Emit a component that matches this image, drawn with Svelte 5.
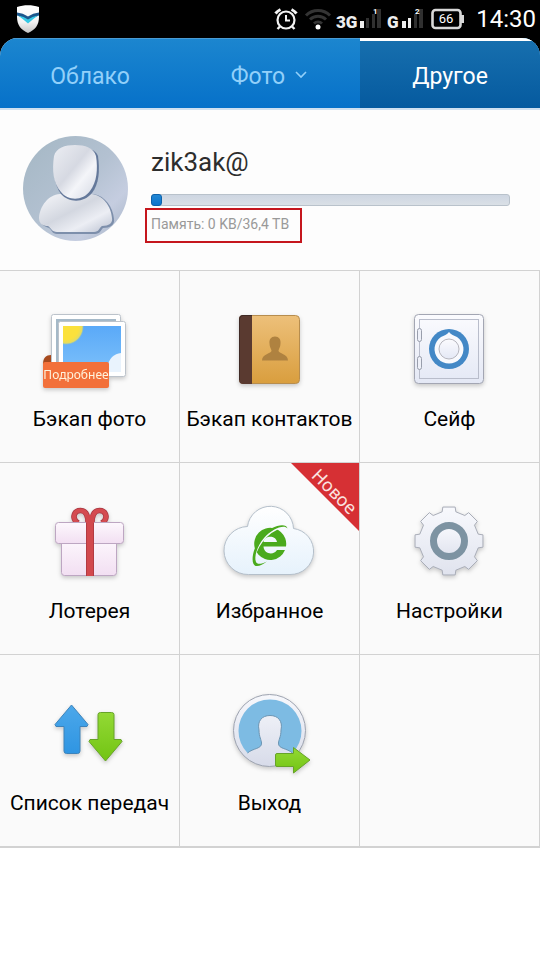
<script lang="ts">
  type Tile = { id: string; label: string; ribbon?: string };

  const tiles: Tile[] = [
    { id: 'photos', label: 'Бэкап фото' },
    { id: 'contacts', label: 'Бэкап контактов' },
    { id: 'safe', label: 'Сейф' },
    { id: 'lottery', label: 'Лотерея' },
    { id: 'favorites', label: 'Избранное', ribbon: 'Новое' },
    { id: 'settings', label: 'Настройки' },
    { id: 'transfers', label: 'Список передач' },
    { id: 'logout', label: 'Выход' },
  ];

  const tabs = [
    { id: 'cloud', label: 'Облако' },
    { id: 'photo', label: 'Фото', menu: true },
    { id: 'other', label: 'Другое' },
  ];

  let active = $state('other');

  // Eight-toothed cog outline around (cx, cy)
  function gearPath(cx: number, cy: number, outer: number, root: number): string {
    const points: string[] = [];
    for (let i = 0; i < 8; i++) {
      const mid = (i * Math.PI) / 4;
      const steps = [
        [-0.23, root],
        [-0.18, outer],
        [0.18, outer],
        [0.23, root],
      ];
      for (const [offset, r] of steps) {
        const x = cx + r * Math.sin(mid + offset);
        const y = cy - r * Math.cos(mid + offset);
        points.push(`${x.toFixed(2)} ${y.toFixed(2)}`);
      }
    }
    return `M${points.join('L')}Z`;
  }
</script>

<div class="screen">
  <header class="status">
    <svg class="shield" width="24" height="28" viewBox="0 0 24 28" aria-hidden="true">
      <defs>
        <linearGradient id="shield" x1="0" y1="0" x2="0" y2="1">
          <stop offset="0" stop-color="#fff" />
          <stop offset="0.6" stop-color="#f4f4f4" />
          <stop offset="1" stop-color="#c4c4c4" />
        </linearGradient>
      </defs>
      <path d="M1 2C8-.3 16-.3 23 2V12C23 20 19 25 12 28C5 25 1 20 1 12Z" fill="url(#shield)" />
      <path d="M1 7.500Q7 8 12 11.500Q17 8 23 7.500V10.500Q17 12 12 15.500Q7 12 1 10.500Z" fill="#1c568c" />
      <path d="M2 10.500Q8 11.500 12 14.500Q16 11.500 22 10.500Q17 14 12 18.500Q7 14 2 10.500Z" fill="#35c8e4" />
    </svg>

    <div class="indicators">
      <svg width="24" height="24" viewBox="0 0 24 24" fill="none" stroke="#f2f2f2" aria-hidden="true">
        <circle cx="12" cy="13" r="8.500" stroke-width="2.200" />
        <path d="M12 8V13.500H16" stroke-width="2" />
        <path d="M1.500 6.500A14 14 0 0 1 6.500 2.500M17.500 2.500A14 14 0 0 1 22.500 6.500" stroke-width="3" />
        <path d="M6 19.500L3.500 22M18 19.500L20.500 22" stroke-width="2.400" />
      </svg>
      <svg width="30" height="24" viewBox="-2 0 30 24" fill="none" stroke="#343434" stroke-width="3" aria-hidden="true">
        <path d="M2 8.500A17 17 0 0 1 26 8.500" />
        <path d="M6 12.500A11.500 11.500 0 0 1 22 12.500" />
        <path d="M10 16.500A6 6 0 0 1 18 16.500" />
        <circle cx="14" cy="20" r="2.500" fill="#fff" stroke="none" />
      </svg>
      <svg width="47" height="24" viewBox="0 0 47 24" aria-hidden="true">
        <text class="net" x="0" y="21">3G</text>
        <path d="M24 14h4v7h-4z" fill="#eee" />
        <path d="M30 11h3v10h-3zM36 7h3v14h-3zM41 2h4v19h-4z" fill="#303030" />
        <text class="sim" x="37" y="7">1</text>
      </svg>
      <svg width="38" height="24" viewBox="0 0 38 24" aria-hidden="true">
        <text class="net" x="0" y="21">G</text>
        <path d="M15 14h4v7h-4zM21 11h3v10h-3z" fill="#eee" />
        <path d="M27 7h3v14h-3zM32 2h4v19h-4z" fill="#303030" />
        <text class="sim" x="28" y="7">2</text>
      </svg>
      <svg class="battery" width="33" height="24" viewBox="0 0 33 24" aria-hidden="true">
        <rect x="1.500" y="3" width="28" height="18" rx="3" fill="none" stroke="#d8d8d8" stroke-width="2.600" />
        <path d="M30 8h3v8h-3z" fill="#d8d8d8" />
        <text x="15" y="16" text-anchor="middle">66</text>
      </svg>
      <time>14:30</time>
    </div>
  </header>

  <nav class="tabs">
    {#each tabs as tab (tab.id)}
      <button class="tab" class:active={active === tab.id} onclick={() => (active = tab.id)}>
        {tab.label}
        {#if tab.menu}
          <svg width="16" height="16" viewBox="0 0 16 16" aria-hidden="true">
            <path d="M3 3L8 8L13 3" fill="none" stroke="currentColor" stroke-width="1.600" />
          </svg>
        {/if}
      </button>
    {/each}
  </nav>

  <section class="profile">
    <svg class="avatar" width="105" height="105" viewBox="0 0 105 105" aria-hidden="true">
      <defs>
        <linearGradient id="avatarBg" x1="0" y1="0" x2="1" y2="1">
          <stop offset="0" stop-color="#a4b7c4" />
          <stop offset="0.5" stop-color="#b3c1d1" />
          <stop offset="0.75" stop-color="#c5cde0" />
          <stop offset="1" stop-color="#a3b2c4" />
        </linearGradient>
        <linearGradient id="head" x1="0" y1="0" x2="1" y2="1">
          <stop offset="0" stop-color="#eceef3" />
          <stop offset="0.45" stop-color="#d6d9e2" />
          <stop offset="0.65" stop-color="#f4f5f9" />
          <stop offset="1" stop-color="#d3d7e2" />
        </linearGradient>
        <linearGradient id="torso" x1="0" y1="0" x2="1" y2="1">
          <stop offset="0" stop-color="#f6f7fa" />
          <stop offset="0.45" stop-color="#d3d7e0" />
          <stop offset="0.7" stop-color="#eceef4" />
          <stop offset="1" stop-color="#b9c0d0" />
        </linearGradient>
        <clipPath id="avatarClip"><circle cx="52.500" cy="52.500" r="52.500" /></clipPath>
      </defs>
      <g clip-path="url(#avatarClip)">
        <rect width="105" height="105" fill="url(#avatarBg)" />
        <path d="M38 59C26 60 18 70 17 82C16 88 21 90 26 92C29 94 29 98 34 98H72C77 98 78 94 80 92C87 92 92 89 91 83C90 71 82 60 71 58Z" fill="#7d8fab" />
        <path d="M37 58C25 59 17 70 16 82C16 88 20 90 25 90C28 92 29 96 34 96H71C76 96 76 92 79 90C86 90 90 87 89 82C88 70 80 59 68 58Z" fill="url(#torso)" />
        <path d="M32 19C36 8 71 8 75 20C77 35 76 48 69 57C61 67 46 67 38 58C31 49 30 34 32 19Z" fill="#64789a" />
        <path d="M31 20C33 12 42 9 52 9S71 12 73 20C75 33 74 46 67 55C60 65 45 65 38 56C30 47 29 34 31 20Z" fill="url(#head)" />
      </g>
    </svg>

    <div class="account">
      <h1>zik3ak@</h1>
      <div class="meter"><div class="used"></div></div>
      <p class="quota">Память: 0 KB/36,4 TB</p>
    </div>
  </section>

  <main class="grid">
    {#each tiles as tile (tile.id)}
      <button class="tile">
        <svg class="icon" width="101" height="90" viewBox="0 0 101 90" aria-hidden="true">
          {#if tile.id === 'photos'}
            <defs>
              <linearGradient id="sky" x1="0" y1="0" x2="0" y2="1">
                <stop offset="0" stop-color="#5aa9f8" />
                <stop offset="1" stop-color="#7cc0fa" />
              </linearGradient>
              <radialGradient id="sun">
                <stop offset="0.7" stop-color="#fbe13c" />
                <stop offset="0.9" stop-color="#e3dc62" />
                <stop offset="1" stop-color="#8fbfb8" stop-opacity="0" />
              </radialGradient>
              <clipPath id="photoClip"><rect x="24" y="21" width="58" height="46" /></clipPath>
            </defs>
            <rect x="12.500" y="9.500" width="69" height="58" rx="2" fill="#fff" stroke="#bcc3cb" />
            <rect x="17" y="14" width="60" height="48" fill="#a5b9c8" />
            <rect x="19.500" y="16.500" width="67" height="55" rx="2" fill="#fff" stroke="#bcc3cb" />
            <g clip-path="url(#photoClip)">
              <rect x="24" y="21" width="58" height="46" fill="url(#sky)" />
              <circle cx="27" cy="22" r="18" fill="url(#sun)" />
              <circle cx="83" cy="62" r="14" fill="#e9f3fd" />
              <circle cx="68" cy="70" r="10" fill="#e9f3fd" />
            </g>
            <path d="M4 59C4 53 7 50 12 50V59Z" fill="#a64a1e" />
            <rect x="4" y="57" width="66" height="26" rx="2" fill="#f2703a" />
            <text class="more" x="37" y="74" text-anchor="middle">Подробнее</text>
          {:else if tile.id === 'contacts'}
            <defs>
              <linearGradient id="cover" x1="0" y1="0" x2="0" y2="1">
                <stop offset="0" stop-color="#edc07a" />
                <stop offset="1" stop-color="#d99e3e" />
              </linearGradient>
            </defs>
            <rect x="20.500" y="10.500" width="60" height="68" rx="4" fill="url(#cover)" stroke="#b78d4e" />
            <path d="M33 10V79H24Q20 79 20 75V14Q20 10 24 10Z" fill="#5a3a30" />
            <path d="M20.500 75V14Q20.500 10.500 24 10.500H33" fill="none" stroke="#3f2a25" />
            <path d="M56 31.500C60 31.500 62 34.500 61.500 38.500C61.500 42 60 43.500 59.500 45.500C59.500 49 69 48.500 69 55.500H43C43 48.500 52.500 49 52.500 45.500C52 43.500 50.500 42 50.500 38.500C50 34.500 52 31.500 56 31.500Z" fill="#af8240" />
          {:else if tile.id === 'safe'}
            <defs>
              <linearGradient id="door" x1="0" y1="0" x2="0" y2="1">
                <stop offset="0" stop-color="#fbfbfe" />
                <stop offset="1" stop-color="#e4e8f5" />
              </linearGradient>
            </defs>
            <rect x="15.500" y="9.500" width="69" height="69" rx="4" fill="url(#door)" stroke="#a3a6b3" />
            <rect x="20.500" y="14.500" width="59" height="59" fill="none" stroke="#b9bdcb" />
            <rect x="18.500" y="23.500" width="4" height="13" rx="2" fill="#eef0f8" stroke="#999eac" />
            <rect x="18.500" y="51.500" width="4" height="13" rx="2" fill="#eef0f8" stroke="#999eac" />
            <circle cx="50" cy="44" r="20" fill="#4388c6" />
            <path d="M50 27C52 30 55 30.500 58 32A14.500 14.500 0 1 1 42 32C45 30.500 48 30 50 27Z" fill="#f8f9fd" />
            <circle cx="50" cy="44" r="10" fill="url(#door)" stroke="#b6b6be" />
          {:else if tile.id === 'lottery'}
            <defs>
              <linearGradient id="box" x1="0" y1="0" x2="0" y2="1">
                <stop offset="0" stop-color="#fdf8fd" />
                <stop offset="1" stop-color="#f2dff2" />
              </linearGradient>
            </defs>
            <rect x="22.500" y="40.500" width="55" height="38" rx="3" fill="url(#box)" stroke="#bda6c2" />
            <g fill="none" stroke="#a93640" stroke-width="5.500">
              <path d="M49 26C49 17 46 13.500 41.500 13.500C35 13.500 33.500 20 36.500 24L39 26" />
              <path d="M53 26C53 17 56 13.500 60.500 13.500C67 13.500 68.500 20 65.500 24L63 26" />
            </g>
            <g fill="none" stroke="#d44b50" stroke-width="4">
              <path d="M49 26C49 17 46 13.500 41.500 13.500C35 13.500 33.500 20 36.500 24L39 26" />
              <path d="M53 26C53 17 56 13.500 60.500 13.500C67 13.500 68.500 20 65.500 24L63 26" />
            </g>
            <rect x="16.500" y="25.500" width="68" height="21" rx="3" fill="url(#box)" stroke="#bda6c2" />
            <rect x="47" y="18" width="8" height="61" fill="#d2484d" />
            <path d="M47.500 26V79M54.500 26V79" stroke="#b23a42" />
          {:else if tile.id === 'favorites'}
            <defs>
              <linearGradient id="cloud" x1="0" y1="0" x2="0" y2="1">
                <stop offset="0" stop-color="#fff" />
                <stop offset="1" stop-color="#e6f2fc" />
              </linearGradient>
            </defs>
            <path d="M29.500 77.500A24 24 0 0 1 28.500 29.500A23.100 23.100 0 0 1 74.500 31.500A23.100 23.100 0 0 1 71 77.500Z" fill="url(#cloud)" stroke="#b4bfca" />
            <path d="M67 49.500H44.500C45 57.500 55 58.500 58 53H66A16 16 0 1 1 67 49.500ZM44.500 45H58C57 38 45.500 38 44.500 45Z" fill="#4aaa1d" fill-rule="evenodd" />
            <path d="M36 64C34 53 47 34 63 30" fill="none" stroke="#f5fafe" stroke-width="2" />
            <path d="M68.500 31.500C67 25 51 29 42 40C33 52 31 68 37 69C40 69.500 44 67.500 48 64.500C42 67.500 38 67.500 37 65C35 60 38 49 45 41C53 32 65 27 68.500 31.500Z" fill="#4aaa1d" />
          {:else if tile.id === 'settings'}
            <defs>
              <linearGradient id="gear" x1="0" y1="0" x2="0" y2="1">
                <stop offset="0" stop-color="#f8f9fd" />
                <stop offset="1" stop-color="#e0e3ee" />
              </linearGradient>
            </defs>
            <path d={gearPath(50, 44, 34.5, 30)} fill="url(#gear)" stroke="#a9adb8" stroke-linejoin="round" />
            <circle cx="50" cy="44" r="15.500" fill="url(#gear)" stroke="#7d93a2" stroke-width="7" />
          {:else if tile.id === 'transfers'}
            <defs>
              <linearGradient id="up" x1="0" y1="0" x2="0" y2="1">
                <stop offset="0" stop-color="#4ca8ea" />
                <stop offset="1" stop-color="#2f95e2" />
              </linearGradient>
              <linearGradient id="down" x1="0" y1="0" x2="0" y2="1">
                <stop offset="0" stop-color="#93d935" />
                <stop offset="1" stop-color="#72c413" />
              </linearGradient>
            </defs>
            <path d="M32.500 16L49 35.500L48 37.500H41V62Q41 64.500 38.500 64.500H27.500Q25 64.500 25 62V37.500H17L16 35.500Z" fill="url(#up)" stroke="#3d83ba" stroke-linejoin="round" />
            <path d="M66.500 72L50 52.500L51 50.500H59V25.500Q59 23.500 61.500 23.500H72.500Q75 23.500 75 25.500V50.500H82L83 52.500Z" fill="url(#down)" stroke="#66a328" stroke-linejoin="round" />
          {:else}
            <defs>
              <linearGradient id="person" x1="0" y1="0" x2="0" y2="1">
                <stop offset="0" stop-color="#f7f8fc" />
                <stop offset="1" stop-color="#d7dbe9" />
              </linearGradient>
              <linearGradient id="exit" x1="0" y1="0" x2="0" y2="1">
                <stop offset="0" stop-color="#93d935" />
                <stop offset="1" stop-color="#72c413" />
              </linearGradient>
            </defs>
            <circle cx="50.500" cy="41.500" r="36" fill="url(#person)" stroke="#9da3b0" />
            <path d="M28.500 64A31.500 31.500 0 1 1 73.500 64C68 59 59 60 59.500 54C59.500 51 62 48 62 41C64 32 59 26.500 51 26.500C43 26.500 38 32 40 41C40 48 42.500 51 42.500 54C43 60 34 59 28.500 64Z" fill="#7dbbe3" />
            <path d="M73.500 64C68 59 59 60 59.500 54C59.500 51 62 48 62 41C64 32 59 26.500 51 26.500C43 26.500 38 32 40 41C40 48 42.500 51 42.500 54C43 60 34 59 28.500 64" fill="none" stroke="#6c95b3" />
            <path d="M58 64.500H74.500V58.500L91 71L74.500 84V77.500H58Q56.500 77.500 56.500 76V66Q56.500 64.500 58 64.500Z" fill="url(#exit)" stroke="#66a328" stroke-linejoin="round" />
          {/if}
        </svg>
        <span class="label">{tile.label}</span>
        {#if tile.ribbon}
          <svg class="ribbon" width="68" height="68" viewBox="0 0 68 68">
            <path d="M0 0H68V68Z" fill="#d63034" />
            <text transform="translate(39 33) rotate(45)" text-anchor="middle">{tile.ribbon}</text>
          </svg>
        {/if}
      </button>
    {/each}
    <div class="tile"></div>
  </main>
</div>

<style>
  :global(body) {
    margin: 0;
    background: #fff;
  }

  .screen {
    font-family: Roboto, 'Noto Sans', sans-serif;
    color: #111;
  }

  button {
    border: 0;
    padding: 0;
    background: none;
    font: inherit;
    cursor: pointer;
  }

  .status {
    display: flex;
    align-items: center;
    justify-content: space-between;
    height: 38px;
    padding: 0 4px 0 16px;
    background: #000;
    color: #fff;
  }

  .indicators {
    display: flex;
    align-items: center;
    gap: 4px;
  }

  .indicators svg {
    flex: none;
  }

  .indicators .battery {
    margin: 0 8px 0 2px;
  }

  .net {
    font-size: 17px;
    font-weight: 900;
    fill: #eee;
  }

  .sim {
    font-size: 8px;
    font-weight: 700;
    fill: #fff;
  }

  .battery text {
    font-size: 13px;
    fill: #fff;
  }

  time {
    font-size: 24px;
    line-height: 38px;
  }

  /* Tabs */
  .tabs {
    display: grid;
    grid-template-columns: repeat(3, 1fr);
    height: 70px;
    overflow: hidden;
    border-radius: 18px 18px 0 0;
    border-bottom: 2px solid #cfe0f0;
    background: linear-gradient(#1c86cf, #0671c9);
    box-shadow: 0 -20px 0 #000;
  }

  .tab {
    display: flex;
    align-items: center;
    justify-content: center;
    gap: 8px;
    padding-top: 6px;
    border-top: 1px solid #4a9bd3;
    font-size: 23px;
    color: #92d0fa;
  }

  .tab.active {
    padding-top: 4px;
    border-top: 3px solid #fff;
    background: linear-gradient(#176fae, #055a9f);
    color: #fff;
  }

  /* Account and storage */
  .profile {
    display: flex;
    gap: 23px;
    padding: 26px 30px 29px 23px;
    border-bottom: 1px solid #d2d2d2;
    background: #fdfdfd;
  }

  .avatar {
    flex: none;
  }

  .account {
    flex: 1;
    min-width: 0;
  }

  h1 {
    margin: 10px 0 16px;
    font-size: 26px;
    font-weight: 400;
    line-height: 32px;
    color: #2d2d2d;
  }

  .meter {
    box-sizing: border-box;
    height: 12px;
    border: 1px solid #b9c2cb;
    border-radius: 3px;
    background: linear-gradient(#ced6e2, #dae0e6);
  }

  .used {
    box-sizing: border-box;
    width: 11px;
    height: 12px;
    margin: -1px;
    border: 1px solid #0d62ab;
    border-radius: 3px;
    background: linear-gradient(#2187d4, #0d74cc);
  }

  .quota {
    box-sizing: border-box;
    width: fit-content;
    height: 35px;
    margin: 2px 0 -2px -6px;
    padding: 0 11px 0 4px;
    border: 2px solid #c5161d;
    font-size: 14px;
    line-height: 29px;
    color: #999;
  }

  /* Tiles */
  .grid {
    display: grid;
    grid-template-columns: repeat(3, 1fr);
    border-bottom: 1px solid #d2d2d2;
  }

  .tile {
    box-sizing: border-box;
    position: relative;
    display: flex;
    flex-direction: column;
    align-items: center;
    height: 192px;
    padding-top: 34px;
    border-right: 1px solid #d2d2d2;
    border-bottom: 1px solid #d2d2d2;
    background: #fafafa;
    color: #000;
  }

  .icon {
    flex: none;
    filter: drop-shadow(0 2px 2px rgba(0, 0, 0, 0.2));
  }

  .label {
    margin-top: 10px;
    font-size: 21px;
    line-height: 28px;
    white-space: nowrap;
  }

  .more {
    font-family: 'Noto Sans', sans-serif;
    font-size: 12px;
    fill: #fff3dc;
  }

  .ribbon {
    position: absolute;
    top: 0;
    right: 0;
    overflow: visible;
  }

  .ribbon text {
    font-family: 'Noto Sans', sans-serif;
    font-size: 18px;
    fill: #fbe3e0;
  }
</style>
